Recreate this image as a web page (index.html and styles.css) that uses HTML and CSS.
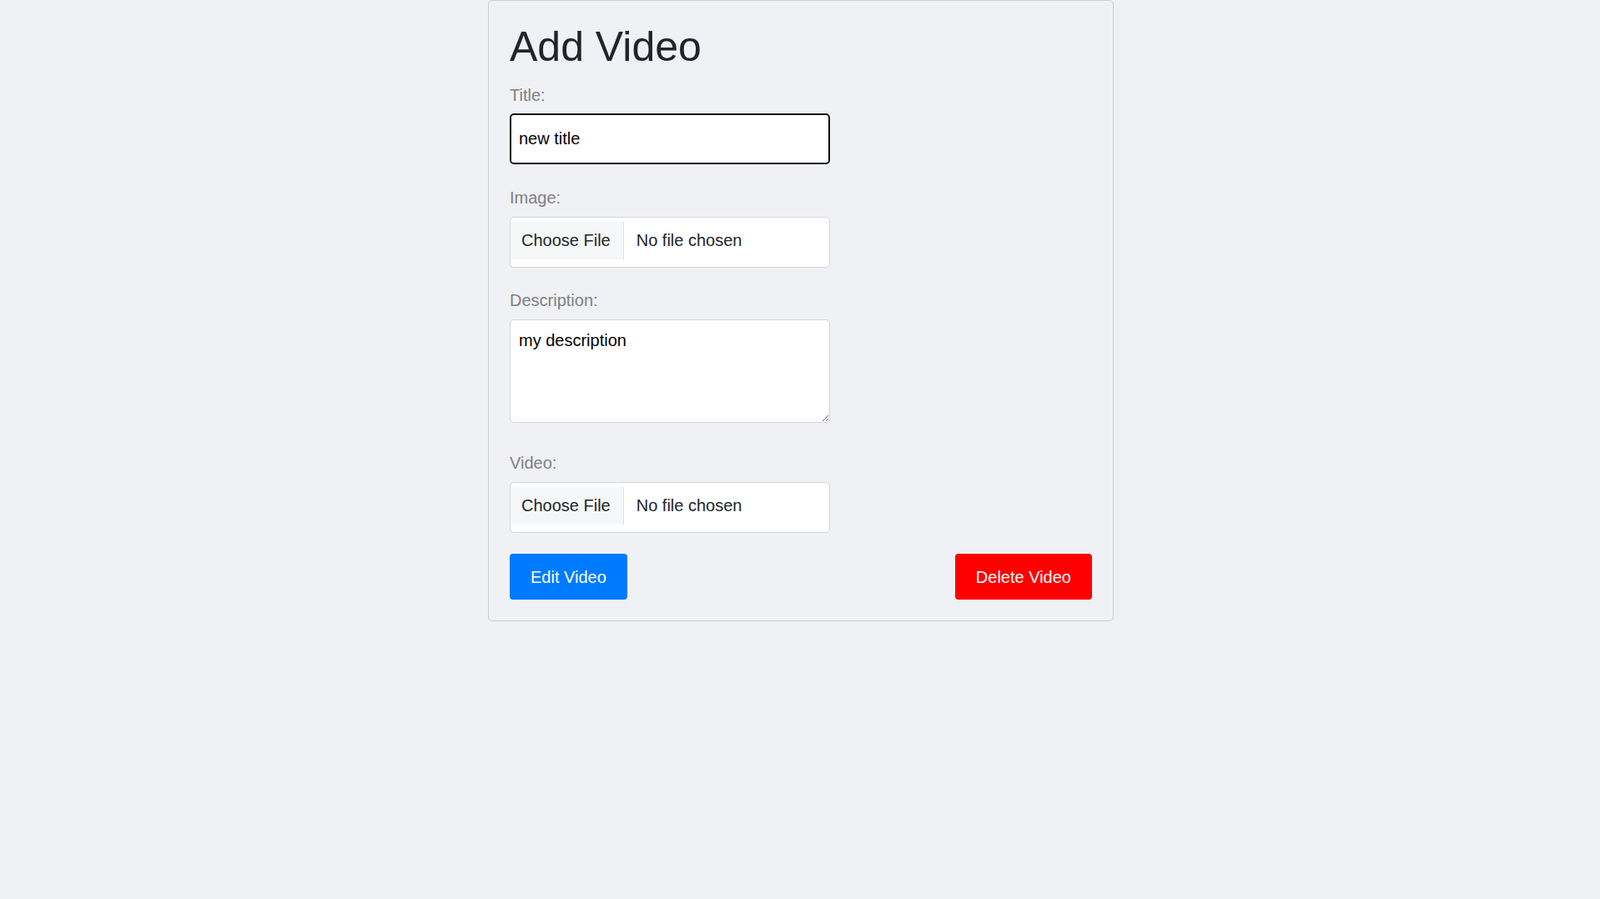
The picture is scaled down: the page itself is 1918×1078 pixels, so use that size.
FILE: index.html
```html
<!DOCTYPE html>
<html lang="en">
<head>
<meta charset="utf-8">
<title>Add Video</title>
<link rel="stylesheet" href="styles.css">
</head>
<body>
<div class="page">
  <div class="card">
    <h1 class="card-title">Add Video</h1>
    <form class="video-form">
      <div class="field field-text">
        <label class="field-label" for="title">Title:</label>
        <input class="text-input is-active" id="title" type="text" value="new title">
      </div>
      <div class="field">
        <label class="field-label" for="image">Image:</label>
        <input class="file-input" id="image" type="file">
      </div>
      <div class="field field-textarea">
        <label class="field-label" for="description">Description:</label>
        <textarea class="text-area" id="description">my description</textarea>
      </div>
      <div class="field field-last">
        <label class="field-label" for="video">Video:</label>
        <input class="file-input" id="video" type="file">
      </div>
      <div class="actions">
        <button type="button" class="btn btn-edit">Edit Video</button>
        <button type="button" class="btn btn-delete">Delete Video</button>
      </div>
    </form>
  </div>
</div>
</body>
</html>
```
FILE: styles.css
```css
html, body {
  margin: 0;
  padding: 0;
  background: #f0f1f5;
}

body {
  font-family: "Liberation Sans", Arial, sans-serif;
  font-size: 20px;
  line-height: 30px;
  color: #212529;
}

.page {
  padding: 0 0 0 2px;
}

.card {
  box-sizing: border-box;
  width: 750px;
  margin: 0 auto;
  padding: 25px 25px 25px;
  border: 1px solid #cccccc;
  border-radius: 5px;
  background: #f0f1f5;
}

.card-title {
  margin: 0 0 13px;
  font-size: 50px;
  line-height: 60px;
  font-weight: 400;
  color: #212529;
}

.video-form {
  margin: 0;
}

.field {
  margin-bottom: 24px;
}

.field-text {
  margin-bottom: 25px;
}

.field-textarea {
  margin-bottom: 33px;
}

.field-last {
  margin-bottom: 25px;
}

.field-label {
  display: block;
  margin-bottom: 8px;
  color: #808080;
  font-size: 20px;
  line-height: 30px;
}

.field-text .field-label {
  margin-bottom: 7px;
}

.text-input {
  display: block;
  box-sizing: border-box;
  width: 384px;
  height: 61px;
  margin: 0;
  padding: 0 10px;
  border: 1px solid #ced4da;
  border-radius: 5px;
  background: #ffffff;
  font-family: "Liberation Sans", Arial, sans-serif;
  font-size: 20px;
  color: #000000;
  outline: none;
}

.text-input.is-active {
  border: 2px solid #111111;
  padding: 0 9px;
}

.file-input {
  display: block;
  box-sizing: border-box;
  width: 384px;
  height: 61px;
  margin: 0;
  padding: 5px 0 10px 0;
  border: 1px solid #d3d5d8;
  border-radius: 5px;
  background: #ffffff;
  font-family: "Liberation Sans", Arial, sans-serif;
  font-size: 20px;
  line-height: 30px;
  color: #212529;
}

.file-input::file-selector-button {
  height: 45px;
  margin: 0 15px 0 0;
  padding: 0 15px 0 13px;
  border: 0;
  border-right: 1px solid #dcdee1;
  border-radius: 0;
  background: #f6f7f8;
  font-family: "Liberation Sans", Arial, sans-serif;
  font-size: 20px;
  color: #212529;
}

.text-area {
  display: block;
  box-sizing: border-box;
  width: 384px;
  height: 124px;
  margin: 0;
  padding: 9px 10px;
  border: 1px solid #d3d5d8;
  border-radius: 5px;
  background: #ffffff;
  font-family: "Liberation Sans", Arial, sans-serif;
  font-size: 20px;
  line-height: 30px;
  color: #000000;
}

.actions {
  display: flex;
  justify-content: space-between;
  align-items: center;
}

.btn {
  box-sizing: border-box;
  height: 55px;
  padding: 0 25px;
  border: 0;
  border-radius: 4px;
  font-family: "Liberation Sans", Arial, sans-serif;
  font-size: 20px;
  line-height: 30px;
  color: #ffffff;
  cursor: pointer;
}

.btn-edit {
  background: #007bff;
}

.btn-delete {
  background: #ff0000;
}
```
